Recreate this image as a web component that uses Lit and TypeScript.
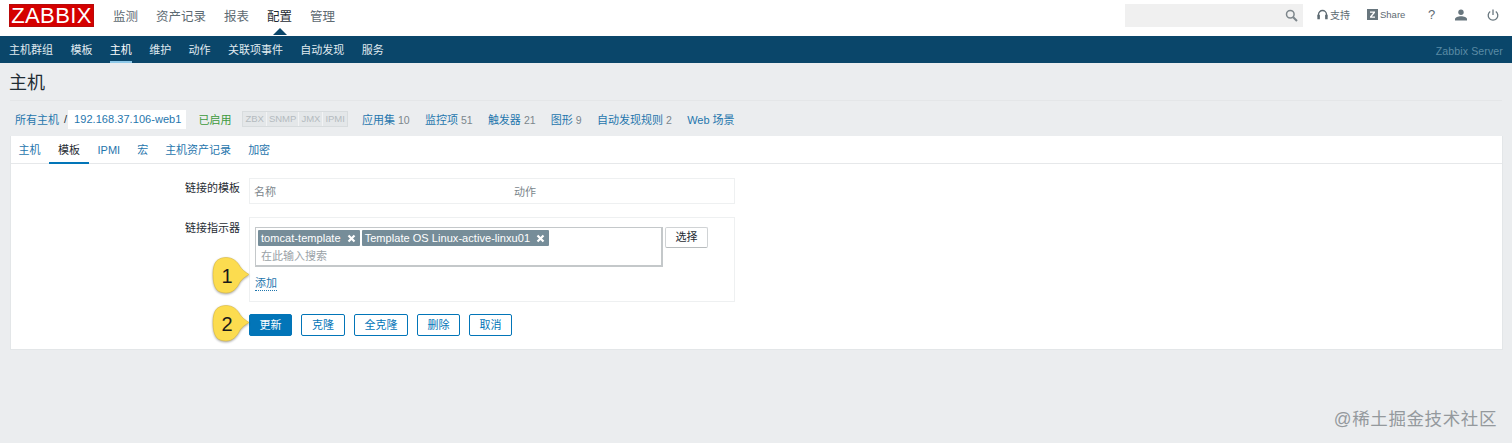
import { LitElement, html, css } from "lit";
import { customElement } from "lit/decorators.js";

const callout = (n: string, cls: string) => html`<div class="callout ${cls}">
  <svg width="42" height="42" viewBox="0 0 42 42"><path class="bubble" d="M17 2.500c6.500 0 11 3.500 14 9 2 3 5 5.500 9 8-4 2.500-7 4.500-9 7.500-3 6.500-7.500 11-14 11-3.500 0-7-1-9-3-3-3.500-4-9-4-15.500 0-6 1-11 4-14 2.500-2 5.500-3 9-3z"/></svg>
  <span>${n}</span></div>`;

@customElement("app-root")
export class AppRoot extends LitElement {
  static styles = css`
    :host { display: block; width: 1512px; height: 443px; overflow: hidden; position: relative; background: #ebedef; font-family: "Liberation Sans", "Noto Sans CJK SC", sans-serif; font-size: 11px; color: #1f2c33; }
    a { color: #1f76ad; text-decoration: none; }
    .top { height: 36px; background: #fff; display: flex; align-items: center; padding: 0 13px 0 9px; box-sizing: border-box; position: relative; }
    .logo { width: 85px; height: 23px; margin-top: -6px; background: #d40000; box-sizing: border-box; border: 1px solid #b80a0a; color: #fff; font-size: 22px; line-height: 21px; text-align: center; letter-spacing: .4px; }
    .mainnav { display: flex; gap: 18px; margin-left: 19px; margin-top: -6px; font-size: 12.5px; color: #5d6a72; }
    .mainnav .on { color: #1f2c33; position: relative; }
    .caret { position: absolute; left: 50%; margin-left: -7px; top: 22px; width: 0; height: 0; border: 7px solid transparent; border-top: 0; border-bottom-color: #0a466a; }
    .spacer { flex: 1; }
    .search { width: 178px; height: 23px; margin-top: -6px; background: #f0f0f0; display: flex; align-items: center; justify-content: flex-end; padding-right: 5px; box-sizing: border-box; }
    .tools { display: flex; align-items: center; margin-top: -7px; font-size: 10px; color: #5d6a72; margin-left: 14px; }
    .tools > * { display: flex; align-items: center; gap: 2px; flex: none; }
    .tools svg { flex: none; }
    .t-support { width: 33px; }
    .t-share { width: 38px; margin-left: 17px; font-size: 9.5px; }
    .t-help { width: 6px; margin-left: 23px; font-size: 13px; }
    .t-user { margin-left: 21px; }
    .t-power { margin-left: 20px; }
    .sub { height: 27px; background: #0a466a; display: flex; align-items: center; padding: 0 9px; color: #fff; font-size: 11px; }
    .sub .items { display: flex; gap: 17.4px; height: 100%; align-items: center; }
    .sub .items span { color: #e0ebf1; position: relative; line-height: 29px; height: 27px; }
    .sub .items .on { color: #fff; border-bottom: 2px solid #8fc9e8; box-sizing: border-box; }
    .server { margin-left: auto; color: #5b8ba5; font-size: 10.6px; letter-spacing: .1px; padding-top: 2px; }
    h1 { margin: 0; font-weight: 400; font-size: 18px; line-height: 24px; padding: 8px 0 0 9px; height: 37px; box-sizing: border-box; color: #1f2c33; }
    .rule { height: 1px; background: #e4e6e8; margin: 0 10px; }
    .crumbs { display: flex; align-items: center; height: 35px; padding: 1px 0 0 15px; box-sizing: border-box; font-size: 11px; }
    .slash { margin: 0 1px 0 5px; color: #1f2c33; }
    .host { background: #fff; padding: 0 5px 0 6px; height: 19px; line-height: 19px; letter-spacing: .05px; }
    .status { color: #3d9a3d; margin-left: 12px; }
    .tags { display: flex; margin: 0 14px 0 11px; border: 1px solid #d8dcde; background: #e4e7e9; color: #b4bbbf; font-size: 9.5px; height: 14px; line-height: 14px; }
    .tags span { padding: 0 2px; border-right: 1px solid #f2f3f4; }
    .tags span:last-child { border-right: 0; }
    .links { display: flex; gap: 15.3px; }
    .links i { font-style: normal; color: #7b868c; font-size: 10.5px; margin-left: 3px; }
    .panel { margin: 0 9px 0 10px; background: #fff; border: 1px solid #e3e6e8; border-top: 0; height: 214px; box-sizing: border-box; position: relative; }
    .tabs { height: 28px; display: flex; border-bottom: 1px solid #e6e8ea; box-sizing: border-box; }
    .tabs a { padding: 0 8.5px; line-height: 29px; height: 28px; box-sizing: border-box; }
    .tabs a:first-child { margin-left: -1px; }
    .tabs a.on { color: #1f2c33; border-bottom: 2px solid #0275b8; padding: 0 9px; }
    .row { display: grid; grid-template-columns: 229px 486px; column-gap: 9px; margin-top: 14px; }
    .row.second { margin-top: 13px; }
    .label { text-align: right; padding-top: 3px; font-size: 11px; color: #1f2c33; line-height: 14px; }
    .second .label { padding-top: 4px; }
    .table { border: 1px solid #eef0f1; height: 26px; box-sizing: border-box; display: grid; grid-template-columns: 260px 1fr; align-items: center; padding-left: 4px; padding-bottom: 1px; color: #7b868c; font-size: 11px; }
    .box { border: 1px solid #eef0f1; height: 85px; box-sizing: border-box; padding: 9px 5px; }
    .inline { display: flex; gap: 2px; align-items: flex-start; }
    .input { width: 408px; height: 40px; box-sizing: border-box; border: 1px solid #c4c8ca; border-bottom-width: 2px; border-right-width: 2px; padding: 2px; flex: none; }
    .chips { display: flex; gap: 2px; }
    .chip { background: #768d99; color: #fff; height: 16px; line-height: 16px; padding: 0 4px 0 3px; display: flex; gap: 6px; align-items: center; border-radius: 1px; font-size: 11px; letter-spacing: .05px; }
    .ph { color: #9aa2a7; padding: 3px 0 0 3px; font-size: 11px; line-height: 15px; }
    .select { width: 43px; height: 21px; box-sizing: border-box; border: 1px solid #d0d3d5; border-bottom-color: #b8bcbe; background: #fff; text-align: center; line-height: 19px; color: #1f2c33; border-radius: 2px; font-size: 11px; }
    .add { display: inline-block; margin-top: 9px; border-bottom: 1px dotted #1f76ad; line-height: 14px; font-size: 11px; }
    .buttons { display: flex; gap: 9px; margin: 12px 0 0 238px; }
    .btn { height: 22px; box-sizing: border-box; border: 1px solid #0275b8; border-radius: 2px; color: #0275b8; background: #fff; line-height: 20px; text-align: center; font-size: 11px; width: 43px; }
    .btn.mid { width: 44px; }
    .btn.wide { width: 54px; }
    .btn.primary { background: #0275b8; color: #fff; }
    .callout { position: absolute; left: 209px; width: 42px; height: 42px; }
    .callout svg { display: block; }
    .bubble { fill: #fcdc4f; stroke: #d9b93f; stroke-width: .6; filter: drop-shadow(0 1px 1px rgba(0,0,0,.35)); }
    .callout span { position: absolute; left: 1px; width: 34px; top: 9px; text-align: center; font-size: 20px; line-height: 24px; color: #1a1a1a; }
    .c1 { top: 255px; }
    .c2 { top: 303px; }
    .mark { position: absolute; right: 15px; bottom: 14px; font-size: 17.5px; line-height: 20px; color: #94999d; letter-spacing: .6px; }
  `;

  render() {
    return html`
      <div class="top">
        <div class="logo">ZABBIX</div>
        <div class="mainnav"><span>监测</span><span>资产记录</span><span>报表</span><span class="on">配置<i class="caret"></i></span><span>管理</span></div>
        <div class="spacer"></div>
        <div class="search"><svg width="13" height="13" viewBox="0 0 13 13" fill="none" stroke="#7d868b" stroke-width="1.500"><circle cx="5.300" cy="5.300" r="3.800"/><path d="M8.200 8.200 12 12" stroke-width="2"/></svg></div>
        <div class="tools">
          <span class="t-support"><svg width="11" height="12" viewBox="0 0 11 12" fill="none" stroke="#5d6a72" stroke-width="1.300"><path d="M1.500 8V5.500a4 4 0 0 1 8 0V8"/><path d="M1 6.500h1.200v3H1zM8.800 6.500H10v3H8.800z" fill="#5d6a72"/></svg>支持</span>
          <span class="t-share"><svg width="11" height="11"><rect width="11" height="11" fill="#68767e"/><path d="M3 2.500h5v1.200L4.800 7.500H8v1.200H3V7.500l3.200-3.800H3z" fill="#fff"/></svg>Share</span>
          <span class="t-help">?</span>
          <span class="t-user"><svg width="12" height="12" viewBox="0 0 12 12" fill="#68767e"><circle cx="6" cy="3.300" r="2.700"/><path d="M0 11.500V10c0-1.500 3-2.800 6-2.800s6 1.300 6 2.800v1.500z"/></svg></span>
          <span class="t-power"><svg width="12" height="12" viewBox="0 0 12 12" fill="none" stroke="#68767e" stroke-width="1.300"><path d="M3.200 2.500a4.800 4.800 0 1 0 5.600 0M6 .5v5.500"/></svg></span>
        </div>
      </div>
      <div class="sub">
        <div class="items"><span>主机群组</span><span>模板</span><span class="on">主机</span><span>维护</span><span>动作</span><span>关联项事件</span><span>自动发现</span><span>服务</span></div>
        <div class="server">Zabbix Server</div>
      </div>
      <h1>主机</h1>
      <div class="rule"></div>
      <div class="crumbs">
        <a>所有主机</a><span class="slash">/</span><a class="host">192.168.37.106-web1</a>
        <span class="status">已启用</span>
        <div class="tags"><span>ZBX</span><span>SNMP</span><span>JMX</span><span>IPMI</span></div>
        <div class="links">
          <a>应用集<i>10</i></a><a>监控项<i>51</i></a><a>触发器<i>21</i></a><a>图形<i>9</i></a><a>自动发现规则<i>2</i></a><a>Web 场景</a>
        </div>
      </div>
      <div class="panel">
        <div class="tabs"><a>主机</a><a class="on">模板</a><a>IPMI</a><a>宏</a><a>主机资产记录</a><a>加密</a></div>
        <div class="row"><div class="label">链接的模板</div><div class="table"><span>名称</span><span>动作</span></div></div>
        <div class="row second"><div class="label">链接指示器</div>
          <div class="box">
            <div class="inline">
              <div class="input">
                <div class="chips">
                  <div class="chip">tomcat-template ${this.x()}</div>
                  <div class="chip">Template OS Linux-active-linxu01 ${this.x()}</div>
                </div>
                <div class="ph">在此输入搜索</div>
              </div>
              <div class="select">选择</div>
            </div>
            <a class="add">添加</a>
          </div>
        </div>
        <div class="buttons">
          <div class="btn primary">更新</div>
          <div class="btn mid">克隆</div>
          <div class="btn wide">全克隆</div>
          <div class="btn">删除</div>
          <div class="btn">取消</div>
        </div>
      </div>
      ${callout("1", "c1")}
      ${callout("2", "c2")}
      <div class="mark">@稀土掘金技术社区</div>
    `;
  }

  x() {
    return html`<svg width="9" height="9" viewBox="0 0 9 9"><path d="M1.500 1.500l6 6M7.500 1.500l-6 6" stroke="#fff" stroke-width="2.200"/></svg>`;
  }
}
